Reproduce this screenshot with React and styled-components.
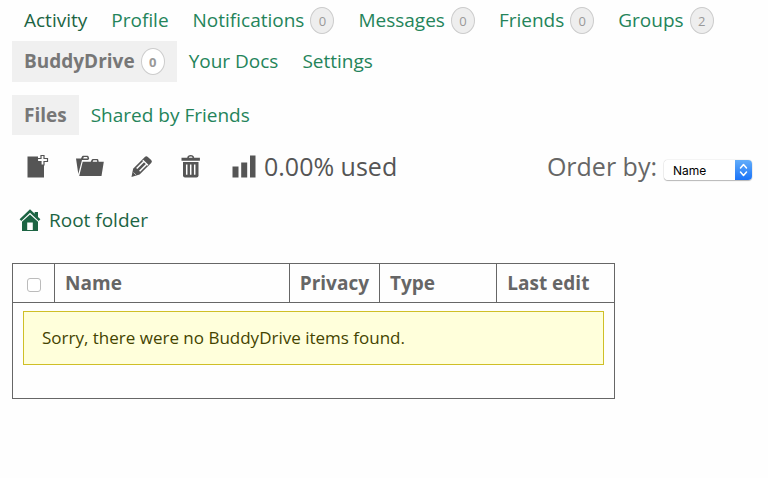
import styled, { createGlobalStyle } from "styled-components";

const GlobalStyle = createGlobalStyle`
  * {
    box-sizing: border-box;
  }
  body {
    margin: 0;
    background-color: #fefefe;
    color: #666;
    font-family: "Open Sans", "Noto Sans", sans-serif;
    font-size: 19px;
    line-height: 26px;
  }
`;

const Page = styled.main`
  padding: 0 12px 24px;
`;

const NavList = styled.ul`
  display: flex;
  flex-wrap: wrap;
  margin: 0 0 ${(props) => props.$gap || "0"};
  padding: 0;
  list-style: none;
`;

const NavLink = styled.a`
  display: flex;
  align-items: center;
  gap: 6px;
  height: ${(props) => (props.$sub ? "40px" : "41px")};
  padding: ${(props) => (props.$sub ? "0 12px" : "0 12px 2px")};
  background-color: ${(props) => (props.$selected ? "#f0f0f0" : "transparent")};
  color: ${(props) =>
    props.$selected ? "#777" : props.$active ? "#1c6443" : "#24845a"};
  font-weight: ${(props) => (props.$selected ? 700 : 400)};
  text-decoration: none;
`;

const Count = styled.span`
  width: 24px;
  height: 27px;
  margin-top: 2px;
  border: 1px solid #ccc;
  border-radius: 50%;
  background-color: ${(props) => (props.$selected ? "#fff" : "#eee")};
  color: #999;
  font-size: 13px;
  line-height: 26px;
  text-align: center;
`;

const Toolbar = styled.div`
  display: flex;
  align-items: center;
  justify-content: space-between;
  height: 34px;
  margin: 14px 4px 24px 14px;
  font-size: 25px;
  line-height: 34px;
`;

const Actions = styled.div`
  display: flex;
  align-items: center;
  gap: 25px;
`;

const IconButton = styled.button`
  display: flex;
  padding: 0;
  border: 0;
  background: none;
  color: #555;
  cursor: pointer;
`;

const Usage = styled.span`
  display: flex;
  align-items: center;
  gap: 8px;
  margin-left: 4px;
  color: #555;
`;

const OrderBy = styled.div`
  display: flex;
  align-items: center;
  gap: 7px;
`;

const SelectBox = styled.div`
  position: relative;
  display: flex;
  width: 88px;
  height: 20px;
  margin-top: 8px;
  border-radius: 4px;
  box-shadow: 0 0 1px #999, 0 1px 1px #bbb;
  overflow: hidden;

  svg {
    position: absolute;
    top: 0;
    right: 0;
    pointer-events: none;
  }
`;

const Select = styled.select`
  appearance: none;
  width: 100%;
  padding: 0 20px 0 9px;
  border: 0;
  background-color: #fff;
  color: #000;
  font-family: Inter, "Liberation Sans", sans-serif;
  font-size: 12px;
`;

const Crumb = styled.a`
  display: inline-flex;
  align-items: center;
  gap: 8px;
  margin: 0 0 30px 7px;
  color: #1c6443;
  text-decoration: none;
`;

const Table = styled.table`
  width: 81%;
  border: 1px solid #666;
  border-collapse: collapse;
  table-layout: fixed;
`;

const HeadCell = styled.th`
  width: ${(props) => props.$width};
  height: 39px;
  padding: 0 10px;
  border: 1px solid #666;
  font-weight: 700;
  text-align: left;
  white-space: nowrap;
`;

const Checkbox = styled.input`
  appearance: none;
  display: block;
  width: 14px;
  height: 14px;
  margin: 4px auto 0;
  border: 1px solid #bbb;
  border-radius: 3px;
  background-color: #fff;

  &:checked {
    background-color: #2a80f0;
  }
`;

const EmptyCell = styled.td`
  padding: 8px 10px 33px;
`;

const Notice = styled.p`
  margin: 0;
  padding: 13px 18px;
  border: 1px solid #cfbf27;
  background-color: #ffffdb;
  color: #440;
  font-size: 17px;
`;

const navItems = [
  { label: "Activity", active: true },
  { label: "Profile" },
  { label: "Notifications", count: 0 },
  { label: "Messages", count: 0 },
  { label: "Friends", count: 0 },
  { label: "Groups", count: 2 },
  { label: "BuddyDrive", count: 0, selected: true },
  { label: "Your Docs" },
  { label: "Settings" },
];

const subNavItems = [
  { label: "Files", selected: true },
  { label: "Shared by Friends" },
];

const columns = [
  { label: "Name", width: "39%" },
  { label: "Privacy", width: "15%" },
  { label: "Type", width: "19.5%" },
  { label: "Last edit", width: "19.5%" },
];

function Nav({ items, sub, gap, label }) {
  return (
    <nav aria-label={label}>
      <NavList $gap={gap}>
        {items.map((item) => (
          <li key={item.label}>
            <NavLink
              href="#"
              $sub={sub}
              $selected={item.selected}
              $active={item.active}
            >
              {item.label}
              {item.count !== undefined && (
                <Count $selected={item.selected}>{item.count}</Count>
              )}
            </NavLink>
          </li>
        ))}
      </NavList>
    </nav>
  );
}

function NewFileIcon() {
  return (
    <svg width="24" height="24" viewBox="0 0 24 24" fill="currentColor">
      <path d="M1.500 2.500H12v5h3v3h3v13H1.500z" />
      <path
        d="M15 1.500h3v3h3.500v3H18V11h-3V7.500h-3.500v-3H15z"
        fill="#fefefe"
        stroke="currentColor"
        strokeWidth="1.200"
      />
    </svg>
  );
}

function FolderIcon() {
  return (
    <svg width="30" height="24" viewBox="0 0 30 24" fill="currentColor">
      <path d="M1 4.500h5l1-2q.3-.7 1-.7h4.500q.8 0 1 .7l.7 2-1 1.500H7L3.300 20z" />
      <path d="M8.200 4.500h4.400l-.5-1.400H8.800z" fill="#fefefe" />
      <path d="M7.700 7.800h8l1-2q.3-.8 1.200-.8h4.400q.9 0 1 .8l.4 2h5.100L26.500 22H4.200z" />
      <path d="M17.600 7.700h4.600l-.3-1.400h-3.600z" fill="#fefefe" />
    </svg>
  );
}

function PencilIcon() {
  return (
    <svg width="24" height="24" viewBox="0 0 24 24" fill="currentColor">
      <path d="M1.500 23l1.600-8.300L14.800 2.900q1.500-1.400 3 0l3.400 3.200q1.400 1.500 0 3L9.600 20.600z" />
      <path
        d="M6.700 14.500l7.300-7.300M9.600 17.300l7.300-7.300"
        stroke="#fefefe"
        strokeWidth="1.600"
      />
      <path d="M12.800 6.200l5.200 5" stroke="#fefefe" strokeWidth="1.200" />
      <path d="M3.500 18.500l2.500 2.400" stroke="#fefefe" strokeWidth=".6" />
    </svg>
  );
}

function TrashIcon() {
  return (
    <svg width="24" height="24" viewBox="0 0 24 24" fill="currentColor">
      <path
        d="M2.500 3.700h5.700C8.500 1.900 9.700 1 11.700 1s3.200.9 3.500 2.700h5.700v3H2.500zM9.800 3.700h3.800c-.2-.8-.8-1.200-1.900-1.200s-1.700.4-1.900 1.200z"
        fillRule="evenodd"
      />
      <path d="M4 8h15.500v13.500q0 2-2 2H6q-2 0-2-2z" />
      <path
        d="M7.700 10.500v10.200M11.700 10.500v10.200M15.700 10.500v10.200"
        stroke="#fefefe"
        strokeWidth="1.500"
      />
    </svg>
  );
}

function StatsIcon() {
  return (
    <svg width="24" height="24" viewBox="0 0 24 24" fill="currentColor">
      <path d="M.5 12.500h6v11h-6zM9.200 8.500h6v15h-6zM18 1.500h5.500v22H18z" />
    </svg>
  );
}

function HomeIcon() {
  return (
    <svg width="22" height="24" viewBox="0 0 22 24" fill="currentColor">
      <path d="M11 1.200l4.700 4.500V4H19v5l2.400 2.300-1.700 1.600L11 4.700l-8.700 8.200-1.700-1.600z" />
      <path
        d="M11 6.400l8 7.400V23H3v-9.200zM8.200 14.500V22h5.600v-7.500z"
        fillRule="evenodd"
      />
    </svg>
  );
}

function SelectArrows() {
  return (
    <svg width="17" height="20" viewBox="0 0 17 20">
      <defs>
        <linearGradient id="arrows" x1="0" y1="0" x2="0" y2="1">
          <stop offset="0" stopColor="#62adfa" />
          <stop offset="1" stopColor="#1a73f8" />
        </linearGradient>
      </defs>
      <path d="M0 0h17v20H0z" fill="url(#arrows)" />
      <path
        d="M5.500 8l3-3.500 3 3.500M5.500 12l3 3.500 3-3.500"
        fill="none"
        stroke="#fff"
        strokeWidth="1.500"
        strokeLinecap="round"
        strokeLinejoin="round"
      />
    </svg>
  );
}

export default function App() {
  return (
    <Page>
      <GlobalStyle />
      <Nav items={navItems} gap="13px" label="Member" />
      <Nav items={subNavItems} sub label="BuddyDrive" />

      <Toolbar>
        <Actions>
          <IconButton type="button" aria-label="New file">
            <NewFileIcon />
          </IconButton>
          <IconButton type="button" aria-label="New folder">
            <FolderIcon />
          </IconButton>
          <IconButton type="button" aria-label="Edit">
            <PencilIcon />
          </IconButton>
          <IconButton type="button" aria-label="Delete">
            <TrashIcon />
          </IconButton>
          <Usage>
            <StatsIcon />
            0.00% used
          </Usage>
        </Actions>
        <OrderBy>
          <label htmlFor="order-by">Order by:</label>
          <SelectBox>
            <Select id="order-by" defaultValue="name">
              <option value="name">Name</option>
            </Select>
            <SelectArrows />
          </SelectBox>
        </OrderBy>
      </Toolbar>

      <Crumb href="#">
        <HomeIcon />
        Root folder
      </Crumb>

      <Table>
        <thead>
          <tr>
            <HeadCell $width="7%">
              <Checkbox type="checkbox" aria-label="Select all" />
            </HeadCell>
            {columns.map((column) => (
              <HeadCell key={column.label} $width={column.width}>
                {column.label}
              </HeadCell>
            ))}
          </tr>
        </thead>
        <tbody>
          <tr>
            <EmptyCell colSpan={5}>
              <Notice>Sorry, there were no BuddyDrive items found.</Notice>
            </EmptyCell>
          </tr>
        </tbody>
      </Table>
    </Page>
  );
}
